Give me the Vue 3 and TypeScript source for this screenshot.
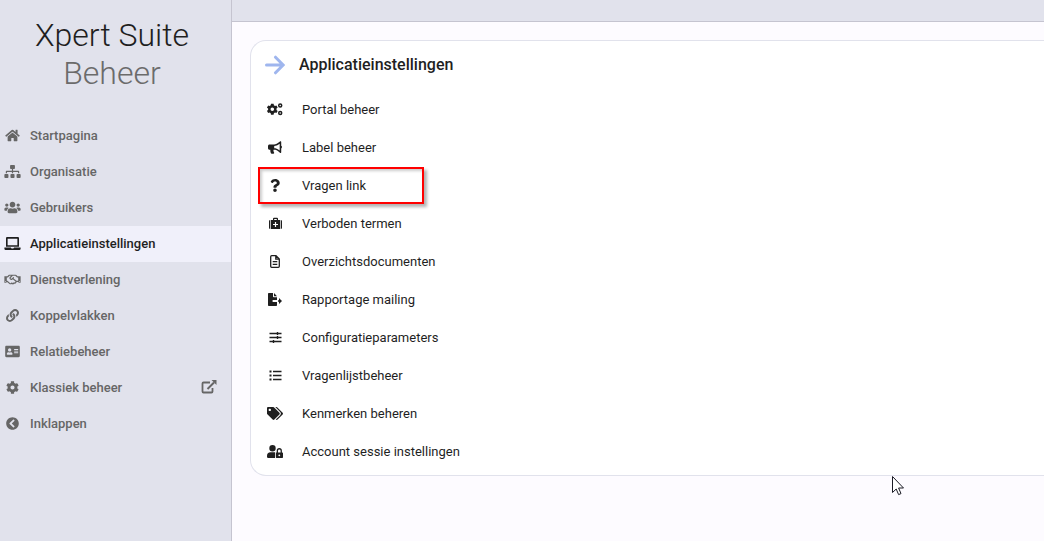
<script setup lang="ts">
interface Icon {
  box: string
  w: number
  h: number
  d: string
  line?: string
  stroke?: number
}

interface Entry {
  label: string
  icon: Icon
  active?: boolean
  external?: boolean
  marked?: boolean
}

const gear =
  'M487.4 315.7l-42.6-24.6c4.3-23.2 4.3-47 0-70.2l42.6-24.6c4.9-2.8 7.1-8.6 5.5-14-11.1-35.6-30-67.8-54.7-94.6-3.8-4.1-10-5.1-14.8-2.3L380.8 110c-17.9-15.4-38.5-27.3-60.8-35.1V25.8c0-5.6-3.9-10.5-9.4-11.7-36.7-8.2-74.3-7.8-109.2 0-5.5 1.2-9.4 6.1-9.4 11.7V75c-22.2 7.9-42.8 19.8-60.8 35.1L88.7 85.5c-4.9-2.8-11-1.9-14.8 2.3-24.7 26.7-43.6 58.9-54.7 94.6-1.7 5.4.6 11.2 5.5 14L67.3 221c-4.3 23.2-4.3 47 0 70.2l-42.6 24.6c-4.9 2.8-7.1 8.6-5.5 14 11.1 35.6 30 67.8 54.7 94.6 3.8 4.1 10 5.1 14.8 2.3l42.6-24.6c17.9 15.4 38.5 27.3 60.8 35.1v49.2c0 5.6 3.9 10.5 9.4 11.7 36.7 8.2 74.3 7.8 109.2 0 5.5-1.2 9.4-6.1 9.4-11.7v-49.2c22.2-7.9 42.8-19.8 60.8-35.1l42.6 24.6c4.9 2.8 11 1.9 14.8-2.3 24.7-26.7 43.6-58.9 54.7-94.6 1.5-5.5-.7-11.3-5.6-14.1zM256 336c-44.1 0-80-35.9-80-80s35.9-80 80-80 80 35.9 80 80-35.9 80-80 80z'

const menu: Entry[] = [
  {
    label: 'Startpagina',
    icon: {
      box: '0 0 576 512', w: 15, h: 13,
      d: 'M280.37 148.26L96 300.11V464a16 16 0 0 0 16 16l112.06-.29a16 16 0 0 0 15.92-16V368a16 16 0 0 1 16-16h64a16 16 0 0 1 16 16v95.64a16 16 0 0 0 16 16.05L464 480a16 16 0 0 0 16-16V300L295.67 148.26a12.19 12.19 0 0 0-15.3 0zM571.6 251.47L488 182.56V44.05a12 12 0 0 0-12-12h-56a12 12 0 0 0-12 12v72.61L318.47 43a48 48 0 0 0-61 0L4.34 251.47a12 12 0 0 0-1.6 16.9l25.5 31A12 12 0 0 0 45.15 301l235.22-193.74a12.19 12.19 0 0 1 15.3 0L530.9 301a12 12 0 0 0 16.9-1.6l25.5-31a12 12 0 0 0-1.7-16.93z',
    },
  },
  {
    label: 'Organisatie',
    icon: {
      box: '0 0 640 512', w: 17, h: 13,
      d: 'M128 352H32c-17.67 0-32 14.33-32 32v96c0 17.67 14.33 32 32 32h96c17.67 0 32-14.33 32-32v-96c0-17.67-14.33-32-32-32zm-24-80h192v48h48v-48h192v48h48v-57.59c0-21.17-17.23-38.41-38.41-38.41H344v-64h40c17.67 0 32-14.33 32-32V32c0-17.67-14.33-32-32-32H256c-17.67 0-32 14.33-32 32v96c0 17.67 14.33 32 32 32h40v64H94.41C73.23 224 56 241.23 56 262.41V320h48v-48zm264 80h-96c-17.67 0-32 14.33-32 32v96c0 17.67 14.33 32 32 32h96c17.67 0 32-14.33 32-32v-96c0-17.67-14.33-32-32-32zm240 0h-96c-17.67 0-32 14.33-32 32v96c0 17.67 14.33 32 32 32h96c17.67 0 32-14.33 32-32v-96c0-17.67-14.33-32-32-32z',
    },
  },
  {
    label: 'Gebruikers',
    icon: {
      box: '0 0 640 512', w: 17, h: 13,
      d: 'M96 224c35.3 0 64-28.7 64-64s-28.7-64-64-64-64 28.7-64 64 28.7 64 64 64zm448 0c35.3 0 64-28.7 64-64s-28.7-64-64-64-64 28.7-64 64 28.7 64 64 64zm32 32h-64c-17.6 0-33.5 7.1-45.1 18.6 40.3 22.1 68.9 62 75.1 109.4h66c17.7 0 32-14.3 32-32v-32c0-35.3-28.7-64-64-64zm-256 0c61.9 0 112-50.1 112-112S381.9 32 320 32 208 82.1 208 144s50.1 112 112 112zm76.8 32h-8.3c-20.8 10-43.9 16-68.5 16s-47.6-6-68.5-16h-8.3C179.6 288 128 339.6 128 403.2V432c0 26.5 21.5 48 48 48h288c26.5 0 48-21.5 48-48v-28.8c0-63.6-51.6-115.2-115.2-115.2zm-223.7-13.4C161.5 263.1 145.6 256 128 256H64c-35.3 0-64 28.7-64 64v32c0 17.7 14.3 32 32 32h65.9c6.3-47.4 34.9-87.3 75.2-109.4z',
    },
  },
  {
    label: 'Applicatieinstellingen',
    active: true,
    icon: {
      box: '0 0 640 512', w: 17, h: 13,
      d: 'M624 416H381.54c-.74 19.81-14.71 32-32.74 32H288c-18.69 0-33.02-17.47-32.77-32H16c-8.8 0-16 7.2-16 16v16c0 35.2 28.8 64 64 64h512c35.2 0 64-28.8 64-64v-16c0-8.8-7.2-16-16-16zM576 48c0-26.4-21.6-48-48-48H112C85.6 0 64 21.6 64 48v336h512V48zm-64 272H128V64h384v256z',
    },
  },
  {
    label: 'Dienstverlening',
    icon: {
      box: '0 0 640 512', w: 17, h: 13,
      d: 'M519.2 127.9l-47.6-47.6A56.252 56.252 0 0 0 432 64H205.2c-14.8 0-29.1 5.9-39.6 16.3L118 127.9H0v255.7h64c17.6 0 31.8-14.2 31.9-31.7h9.1l84.6 76.4c30.9 25.1 73.8 25.7 105.6 3.8 12.5 10.8 26 15.9 41.1 15.9 18.2 0 35.3-7.4 48.8-24 22.1 8.7 48.2 2.6 64-16.8l26.2-32.3c5.6-6.9 9.1-14.8 10.9-23h57.9c.1 17.5 14.4 31.7 31.9 31.7h64V127.9H519.2zM48 351.6c-8.8 0-16-7.2-16-16s7.2-16 16-16 16 7.2 16 16c0 8.9-7.2 16-16 16zm390-6.9l-26.1 32.2c-2.8 3.4-7.8 4-11.3 1.2l-23.9-19.4-30 36.5c-6 7.3-15 4.8-18 2.4l-36.8-31.5-15.6 19.2c-13.9 17.1-39.2 19.7-55.3 6.6l-97.3-88H96V175.8h41.9l61.7-61.6c2-.8 3.7-1.5 5.7-2.3H262l-38.7 35.5c-29.4 26.9-31.1 72.3-4.4 101.3 14.8 16.2 61.2 41.2 101.5 4.4l8.2-7.5 108.2 87.8c3.4 2.8 3.9 7.9 1.2 11.3zm106-40.8h-69.2c-2.3-2.8-4.9-5.4-7.7-7.7l-102.7-83.4 12.5-11.4c6.5-6 7-16.1 1-22.6L367 167.1c-6-6.5-16.1-6.9-22.6-1l-55.2 50.6c-9.5 8.7-25.7 9.4-34.6 0-9.3-9.9-8.5-25.1 1.2-33.9l65.6-60.1c7.4-6.8 17-10.5 27-10.5l83.7-.2c2.1 0 4.1.8 5.5 2.3l61.7 61.6H544v128zm48 47.7c-8.8 0-16-7.2-16-16s7.2-16 16-16 16 7.2 16 16c0 8.9-7.2 16-16 16z',
    },
  },
  {
    label: 'Koppelvlakken',
    icon: {
      box: '0 0 512 512', w: 13, h: 13,
      d: 'M326.612 185.391c59.747 59.809 58.927 155.698.36 214.59-.11.12-.24.25-.36.37l-67.2 67.2c-59.27 59.27-155.699 59.262-214.96 0-59.27-59.26-59.27-155.7 0-214.96l37.106-37.106c9.84-9.84 26.786-3.3 27.294 10.606.648 17.722 3.826 35.527 9.69 52.721 1.986 5.822.567 12.262-3.783 16.612l-13.087 13.087c-28.026 28.026-28.905 73.66-1.155 101.96 28.024 28.579 74.086 28.749 102.325.51l67.2-67.19c28.191-28.191 28.073-73.757 0-101.83-3.701-3.694-7.429-6.564-10.341-8.569a16.037 16.037 0 0 1-6.947-12.606c-.396-10.567 3.348-21.456 11.698-29.806l21.054-21.055c5.521-5.521 14.182-6.199 20.584-1.731a152.482 152.482 0 0 1 20.522 17.197zM467.547 44.449c-59.261-59.262-155.69-59.27-214.96 0l-67.2 67.2c-.12.12-.25.25-.36.37-58.566 58.892-59.387 154.781.36 214.59a152.454 152.454 0 0 0 20.521 17.196c6.402 4.468 15.064 3.789 20.584-1.731l21.054-21.055c8.35-8.35 12.094-19.239 11.698-29.806a16.037 16.037 0 0 0-6.947-12.606c-2.912-2.005-6.64-4.875-10.341-8.569-28.073-28.073-28.191-73.639 0-101.83l67.2-67.19c28.239-28.239 74.3-28.069 102.325.51 27.75 28.3 26.872 73.934-1.155 101.96l-13.087 13.087c-4.35 4.35-5.769 10.79-3.783 16.612 5.864 17.194 9.042 34.999 9.69 52.721.509 13.906 17.454 20.446 27.294 10.606l37.106-37.106c59.271-59.259 59.271-155.699.001-214.959z',
    },
  },
  {
    label: 'Relatiebeheer',
    icon: {
      box: '0 0 576 512', w: 15, h: 13,
      d: 'M528 32H48C21.5 32 0 53.5 0 80v352c0 26.5 21.5 48 48 48h480c26.5 0 48-21.5 48-48V80c0-26.5-21.5-48-48-48zm-352 96c35.3 0 64 28.7 64 64s-28.7 64-64 64-64-28.7-64-64 28.7-64 64-64zm112 236.8c0 10.6-10 19.2-22.4 19.2H86.4C74 384 64 375.4 64 364.8v-19.2c0-31.8 30.1-57.6 67.2-57.6h5c12.3 5.1 25.7 8 39.8 8s27.6-2.9 39.8-8h5c37.1 0 67.2 25.8 67.2 57.6v19.2zM512 312c0 4.4-3.6 8-8 8H360c-4.4 0-8-3.6-8-8v-16c0-4.4 3.6-8 8-8h144c4.4 0 8 3.6 8 8v16zm0-64c0 4.4-3.6 8-8 8H360c-4.4 0-8-3.6-8-8v-16c0-4.4 3.6-8 8-8h144c4.4 0 8 3.6 8 8v16zm0-64c0 4.4-3.6 8-8 8H360c-4.4 0-8-3.6-8-8v-16c0-4.4 3.6-8 8-8h144c4.4 0 8 3.6 8 8v16z',
    },
  },
  { label: 'Klassiek beheer', external: true, icon: { box: '0 0 512 512', w: 13, h: 13, d: gear } },
  {
    label: 'Inklappen',
    icon: {
      box: '0 0 512 512', w: 13, h: 13,
      d: 'M256 504C119 504 8 393 8 256S119 8 256 8s248 111 248 248-111 248-248 248zM142.1 273l135.5 135.5c9.4 9.4 24.6 9.4 33.9 0l17-17c9.4-9.4 9.4-24.6 0-33.9L226.9 256l101.6-101.6c9.4-9.4 9.4-24.6 0-33.9l-17-17c-9.4-9.4-24.6-9.4-33.9 0L142.1 239c-9.4 9.4-9.4 24.6 0 34z',
    },
  },
]

const settings: Entry[] = [
  {
    label: 'Portal beheer',
    icon: {
      box: '0 0 16 13', w: 16, h: 13,
      d: 'M4 .8h2.600l.3 1.500 1.100.600 1.400-.500 1.300 2.200-1.200 1v1.300l1.200 1-1.300 2.200-1.400-.500-1.100.600-.300 1.500H4l-.300-1.500-1.100-.600-1.400.500L-.100 7.900l1.200-1V5.600l-1.200-1 1.300-2.200 1.400.500 1.100-.600zM5.300 4.500a1.800 1.800 0 1 0 0 3.600 1.800 1.800 0 0 0 0-3.600z',
      line: 'M13.200 1.100a1.500 1.500 0 1 1 0 3 1.500 1.500 0 0 1 0-3zM13.200 8.400a1.500 1.500 0 1 1 0 3 1.500 1.500 0 0 1 0-3z',
      stroke: 1.5,
    },
  },
  {
    label: 'Label beheer',
    icon: {
      box: '0 0 576 512', w: 14, h: 13,
      d: 'M576 240c0-23.63-12.95-44.04-32-55.12V32.01C544 23.26 537.02 0 512 0c-7.12 0-14.19 2.38-19.98 7.02l-85.03 68.03C364.28 109.19 310.66 128 256 128H64c-35.35 0-64 28.65-64 64v96c0 35.35 28.65 64 64 64h33.7c-1.39 10.48-2.18 21.14-2.18 32 0 39.77 9.26 77.35 25.56 110.94 5.19 10.69 16.52 17.06 28.4 17.06h74.28c26.05 0 41.69-29.84 25.9-50.56-16.4-21.52-26.15-48.36-26.15-77.44 0-11.11 1.62-21.79 4.41-32H256c54.66 0 108.28 18.81 150.98 52.95l85.03 68.03a32.023 32.023 0 0 0 19.98 7.02c24.92 0 32-22.78 32-32V295.13C563.05 284.04 576 263.63 576 240zm-96 141.42l-33.05-26.44C392.95 311.78 325.12 288 256 288v-96c69.12 0 136.95-23.78 190.95-66.98L480 98.58v282.84z',
    },
  },
  {
    label: 'Vragen link',
    marked: true,
    icon: {
      box: '0 0 384 512', w: 10, h: 13,
      d: 'M202.021 0C122.202 0 70.503 32.703 29.914 91.026c-7.363 10.58-5.093 25.086 5.178 32.874l43.138 32.709c10.373 7.865 25.132 6.026 33.253-4.148 25.049-31.381 43.63-49.449 82.757-49.449 30.764 0 68.816 19.799 68.816 49.631 0 22.552-18.617 34.134-48.993 51.164-35.423 19.86-82.299 44.576-82.299 106.405V320c0 13.255 10.745 24 24 24h72.471c13.255 0 24-10.745 24-24v-5.773c0-42.86 125.268-44.645 125.268-160.627C377.504 66.256 286.902 0 202.021 0zM192 373.459c-38.196 0-69.271 31.075-69.271 69.271 0 38.195 31.075 69.27 69.271 69.27s69.271-31.075 69.271-69.271-31.075-69.27-69.271-69.27z',
    },
  },
  {
    label: 'Verboden termen',
    icon: {
      box: '0 0 13 13', w: 13, h: 13,
      d: 'M1.300 3v9Q0 12 0 10.800V4.200Q0 3 1.300 3zM11.700 3Q13 3 13 4.200v6.600Q13 12 11.700 12zM2 3h2V1.800Q4 .800 5 .800h3q1 0 1 1V3h2v9H2zM5.200 3h2.600V2H5.200zM5.900 5v1.900H4v1.200h1.900V10h1.200V8.100H9V6.900H7.100V5z',
    },
  },
  {
    label: 'Overzichtsdocumenten',
    icon: {
      box: '0 0 10 13', w: 10, h: 13,
      d: '',
      line: 'M1.800.700h4.200L9.300 4v7.300q0 1-1 1H1.700q-1 0-1-1V1.700q0-1 1-1zM5.800.700V4.200h3.400M2.700 6.700h4.600M2.700 9.300h4.600',
      stroke: 1.3,
    },
  },
  {
    label: 'Rapportage mailing',
    icon: {
      box: '0 0 14 13', w: 14, h: 13,
      d: 'M.800 0H5v3.400q0 .800.800.800H9V7H4.600v2H9v3.200q0 .800-.800.800H.800Q0 13 0 12.200V.800Q0 0 .800 0zM6 0l3 3.200H6zM10 7.200h1V5l3 3-3 3V8.800h-1z',
    },
  },
  {
    label: 'Configuratieparameters',
    icon: {
      box: '0 0 13 13', w: 13, h: 13,
      d: '',
      line: 'M.500 2.500h12M.500 6.500h12M.500 10.500h12M8.500 1v3M8.500 5v3M4.500 9v3',
      stroke: 1.4,
    },
  },
  {
    label: 'Vragenlijstbeheer',
    icon: {
      box: '0 0 13 13', w: 13, h: 13,
      d: 'M.500 1.500h2v2h-2zM.500 5.500h2v2h-2zM.500 9.500h2v2h-2z',
      line: 'M4 2.500h8.500M4 6.500h8.500M4 10.500h8.500',
      stroke: 1.4,
    },
  },
  {
    label: 'Kenmerken beheren',
    icon: {
      box: '0 0 640 512', w: 16, h: 13,
      d: 'M497.941 225.941L286.059 14.059A48 48 0 0 0 252.118 0H48C21.49 0 0 21.49 0 48v204.118a48 48 0 0 0 14.059 33.941l211.882 211.882c18.744 18.745 49.136 18.746 67.882 0l204.118-204.118c18.745-18.745 18.745-49.137 0-67.882zM112 160c-26.51 0-48-21.49-48-48s21.49-48 48-48 48 21.49 48 48-21.49 48-48 48zm513.941 133.823L421.823 497.941c-18.745 18.745-49.137 18.745-67.882 0l-.36-.36L527.64 323.522c16.999-16.999 26.362-39.6 26.362-63.64s-9.362-46.641-26.362-63.64L331.397 0h48.721a48 48 0 0 1 33.941 14.059l211.882 211.882c18.745 18.745 18.745 49.137 0 67.882z',
    },
  },
  {
    label: 'Account sessie instellingen',
    icon: {
      box: '0 0 16 13', w: 16, h: 13,
      d: 'M5.500 0a3.200 3.200 0 1 1 0 6.400 3.200 3.200 0 0 1 0-6.400zM3.600 7.300h4.400V13H1.200Q0 13 0 11.800v-.900Q0 7.300 3.600 7.300zM8.800 7.500h.900V5.700a2.600 2.600 0 0 1 5.200 0v1.800h.400q.700 0 .700.700v4.100q0 .700-.700.700H9.500Q8.800 13 8.800 12.300zM11 7.500h2.600V5.700a1.300 1.300 0 0 0-2.600 0zM12.300 9.400a.900.900 0 1 0 0 1.800.900.900 0 0 0 0-1.800z',
    },
  },
]
</script>

<template>
  <div class="app">
    <aside class="sidebar">
      <header class="brand">
        <div class="brand-name">Xpert Suite</div>
        <div class="brand-sub">Beheer</div>
      </header>
      <nav>
        <a v-for="item in menu" :key="item.label" href="#" class="nav-item" :class="{ active: item.active }">
          <span class="nav-icon">
            <svg :viewBox="item.icon.box" :width="item.icon.w" :height="item.icon.h" aria-hidden="true">
              <path :d="item.icon.d" fill="currentColor" fill-rule="evenodd" />
            </svg>
          </span>
          <span class="nav-label">{{ item.label }}</span>
          <svg v-if="item.external" viewBox="0 0 16 14" width="16" height="14" aria-hidden="true">
            <path d="M9 2.500H2.500Q1.500 2.500 1.500 3.500v8q0 1 1 1h8q1 0 1-1V8" fill="none" stroke="currentColor" stroke-width="1.800" />
            <path d="M6.500 9L13 2.500" fill="none" stroke="currentColor" stroke-width="2" />
            <path d="M10.500 0H15.500V5z" fill="currentColor" />
          </svg>
        </a>
      </nav>
    </aside>

    <div class="content">
      <div class="topbar"></div>
      <main>
        <section class="card">
          <header class="card-head">
            <svg viewBox="0 0 20 20" width="20" height="20" aria-hidden="true">
              <path d="M1.500 10H17.500M10.500 2.200L18.200 10L10.500 17.800" fill="none" stroke="#9fb6ee" stroke-width="3" stroke-linecap="round" />
            </svg>
            <h1>Applicatieinstellingen</h1>
          </header>
          <a v-for="item in settings" :key="item.label" href="#" class="row">
            <span class="row-icon">
              <svg :viewBox="item.icon.box" :width="item.icon.w" :height="item.icon.h" aria-hidden="true">
                <path v-if="item.icon.d" :d="item.icon.d" fill="currentColor" fill-rule="evenodd" />
                <path v-if="item.icon.line" :d="item.icon.line" fill="none" stroke="currentColor" :stroke-width="item.icon.stroke" />
              </svg>
            </span>
            <span>{{ item.label }}</span>
            <span v-if="item.marked" class="marker"></span>
          </a>
        </section>
      </main>
    </div>

    <svg class="pointer" viewBox="0 0 12 20" width="12" height="20" aria-hidden="true">
      <path d="M.5.500V16.500L4.200 13L6.600 18.600L9 17.600L6.600 12H11.500z" fill="#fff" stroke="#1b1b25" />
    </svg>
  </div>
</template>

<style>
body {
  margin: 0;
}
</style>

<style scoped>
.app {
  position: relative;
  display: flex;
  min-height: 100vh;
  overflow: hidden;
  background: #fdfbff;
  color: #1f1f1f;
  font-family: Roboto, "Liberation Sans", sans-serif;
}

.sidebar {
  flex: 0 0 231px;
  border-right: 1px solid #c5c4d0;
  background: #e1e2ec;
}

.brand {
  padding: 16px 7px 26px 0;
  font-size: 32px;
  font-weight: 300;
  line-height: 38px;
  text-align: center;
}

.brand-sub {
  color: #6b6b6b;
}

.nav-item {
  box-sizing: border-box;
  display: flex;
  align-items: center;
  height: 36px;
  padding: 0 14px 2px 0;
  color: #666;
  font-size: 13px;
  font-weight: 500;
  text-decoration: none;
}

.nav-item.active {
  background: #f0f0fa;
  color: #1f1f1f;
}

.nav-icon {
  display: flex;
  justify-content: center;
  width: 25px;
  margin-right: 5px;
}

.nav-label {
  flex: 1;
}

.content {
  flex: 1;
  min-width: 0;
}

.topbar {
  height: 21px;
  border-bottom: 1px solid #c5c4d0;
  background: #e1e2ec;
}

main {
  padding: 18px 0 18px 18px;
}

.card {
  padding-bottom: 5px;
  border: 1px solid #e1e2ec;
  border-right: 0;
  border-radius: 16px 0 0 16px;
  background: #fff;
}

.card-head {
  display: flex;
  align-items: center;
  gap: 14px;
  height: 47px;
  padding: 0 14px 2px;
}

h1 {
  margin: 0;
  font-size: 16px;
  font-weight: 500;
}

.row {
  position: relative;
  display: flex;
  align-items: center;
  height: 38px;
  padding-left: 14px;
  color: #1f1f1f;
  font-size: 13px;
  text-decoration: none;
}

.row-icon {
  display: flex;
  justify-content: center;
  width: 20px;
  margin-right: 17px;
}

.marker {
  position: absolute;
  top: 1px;
  left: 7px;
  box-sizing: border-box;
  width: 166px;
  height: 37px;
  border: 2px solid #f00;
  box-shadow: 3px 3px 3px rgba(0, 0, 0, 0.3), inset 2px 2px 3px rgba(0, 0, 0, 0.2);
}

.pointer {
  position: absolute;
  top: 476px;
  left: 892px;
}
</style>
